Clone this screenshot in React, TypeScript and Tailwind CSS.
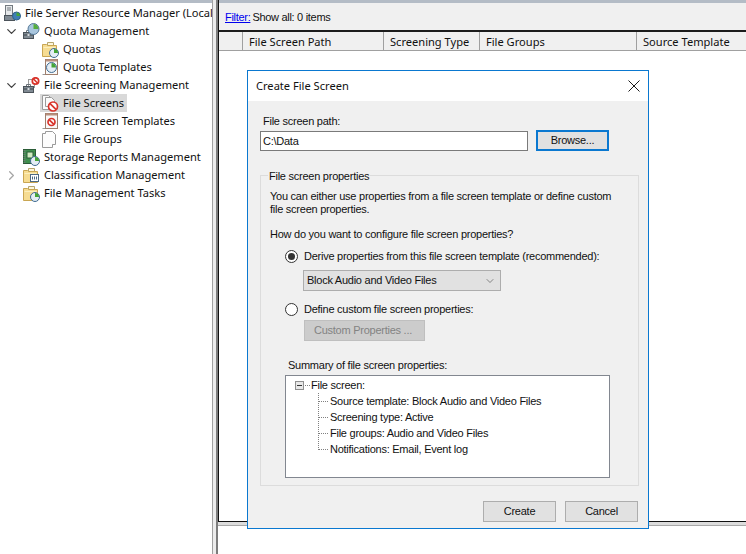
import { ChevronDown, ChevronRight } from "lucide-react";
import type { ReactNode } from "react";

function Blocked({ x = 8, y = 8, r = 4 }: { x?: number; y?: number; r?: number }) {
  return (
    <g>
      <circle cx={x} cy={y} r={r} fill="#fff" stroke="#d9342b" strokeWidth="1.7" />
      <path d={`M${x - r * 0.7} ${y - r * 0.7}L${x + r * 0.7} ${y + r * 0.7}`} stroke="#d9342b" strokeWidth="1.7" />
    </g>
  );
}

function Clock({ x = 12, y = 12, r = 4.5 }: { x?: number; y?: number; r?: number }) {
  return (
    <g>
      <circle cx={x} cy={y} r={r} fill="#e4edf5" stroke="#3f6b91" />
      <path d={`M${x} ${y}V${y - r + 0.5}A${r - 0.5} ${r - 0.5} 0 0 1 ${x + r - 0.5} ${y}Z`} fill="#45a536" />
    </g>
  );
}

// small dark case the management nodes sit on
function Case() {
  return (
    <g>
      <path d="M3.5 9.5v-2h4v2" fill="none" stroke="#6d757c" />
      <rect x="0.5" y="9.5" width="10" height="6" fill="#808a93" stroke="#4b535a" />
      <path d="M1 12h9" stroke="#3f464c" />
      <rect x="4.5" y="11" width="2" height="2" fill="#d7dce0" />
    </g>
  );
}

function Folder({ children }: { children?: ReactNode }) {
  return (
    <svg width="17" height="17" viewBox="0 0 17 17">
      <path d="M5.5 1.5h6v3h-6z" fill="#fdf6dc" stroke="#b6a56d" />
      <path d="M0.5 3.5h4l1 1h9v11h-14z" fill="#f6dc92" stroke="#c9a653" />
      <path d="M1.5 6.5h12" stroke="#fbeebc" />
      {children}
    </svg>
  );
}

function Page({ children }: { children?: ReactNode }) {
  return (
    <svg width="17" height="17" viewBox="0 0 17 17">
      <path d="M0.5 15.5h3" stroke="#9a9a9a" />
      <rect x="3.5" y="0.5" width="12" height="15" fill="#f8f8f8" stroke="#a07f6d" />
      <path d="M4 1.5h11" stroke="#b98f7c" strokeWidth="2" />
      {children}
    </svg>
  );
}

function TreeIcon({ name }: { name: string }) {
  switch (name) {
    case "root":
      return (
        <svg width="17" height="17" viewBox="0 0 17 17">
          <rect x="1.5" y="0.5" width="7" height="10" fill="#e6e8ea" stroke="#737a80" />
          <path d="M3 3h4M3 5h4" stroke="#737a80" />
          <rect x="0.5" y="10.5" width="10" height="5" fill="#808a93" stroke="#4b535a" />
          <circle cx="12.5" cy="11" r="4" fill="#3f7fb5" stroke="#2f5f8a" />
          <path d="M12.5 11V7.5A3.5 3.5 0 0 1 16 11Z" fill="#45a536" />
        </svg>
      );
    case "quota":
      return (
        <svg width="17" height="17" viewBox="0 0 17 17">
          <Case />
          <circle cx="10.5" cy="6" r="5.5" fill="#a9c6de" stroke="#567a99" />
          <path d="M10.5 6V1A5 5 0 0 1 15.5 6Z" fill="#55ad3e" />
        </svg>
      );
    case "quotas":
      return (
        <Folder>
          <Clock />
        </Folder>
      );
    case "templates":
      return (
        <Page>
          <Clock x={9.5} y={8.5} r={5} />
        </Page>
      );
    case "screening":
      return (
        <svg width="17" height="17" viewBox="0 0 17 17">
          <rect x="5.5" y="2.5" width="6" height="8" fill="#fafafa" stroke="#9a9a9a" />
          <Case />
          <Blocked x={12.5} y={4} r={3.2} />
        </svg>
      );
    case "screens":
      return (
        <svg width="17" height="17" viewBox="0 0 17 17">
          <path d="M0.5 0.5h6l2 2v12h-8z" fill="#fafafa" stroke="#9a9a9a" />
          <path d="M3.5 2.5h6l3 3v6h-9z" fill="#fafafa" stroke="#9a9a9a" />
          <Blocked x={11} y={11.5} r={4.5} />
        </svg>
      );
    case "screenTemplates":
      return (
        <Page>
          <Blocked x={9.5} y={9} r={3.5} />
        </Page>
      );
    case "groups":
      return (
        <svg width="17" height="17" viewBox="0 0 17 17">
          <path d="M0.5 2.5h7l3 3v11h-10z" fill="#fdfdfd" stroke="#9a9a9a" />
          <path d="M3.5 2.5v-2h7l3 3v10h-3" fill="#fdfdfd" stroke="#9a9a9a" />
        </svg>
      );
    case "reports":
      return (
        <svg width="17" height="17" viewBox="0 0 17 17">
          <rect x="0.5" y="0.5" width="12" height="14" fill="#3f8f4e" stroke="#2b5c37" />
          <path d="M1.5 1v13" stroke="#6d7a70" strokeWidth="2" strokeDasharray="1 1" />
          <rect x="4" y="3" width="6" height="6" fill="#cfe9c0" stroke="#2b5c37" />
          <Clock x={12} y={12} />
        </svg>
      );
    case "classification":
      return (
        <Folder>
          <rect x="7.5" y="7.5" width="8" height="7" fill="#fff" stroke="#4e6a85" />
          <path d="M9.5 9.5v3M11.5 9.5v3M13.5 9.5v3" stroke="#4e6a85" />
        </Folder>
      );
    default:
      return (
        <Folder>
          <Clock />
        </Folder>
      );
  }
}

const tree = [
  { label: "File Server Resource Manager (Local)", icon: "root", depth: 0 },
  { label: "Quota Management", icon: "quota", depth: 1, open: true },
  { label: "Quotas", icon: "quotas", depth: 2 },
  { label: "Quota Templates", icon: "templates", depth: 2 },
  { label: "File Screening Management", icon: "screening", depth: 1, open: true },
  { label: "File Screens", icon: "screens", depth: 2, selected: true },
  { label: "File Screen Templates", icon: "screenTemplates", depth: 2 },
  { label: "File Groups", icon: "groups", depth: 2 },
  { label: "Storage Reports Management", icon: "reports", depth: 1 },
  { label: "Classification Management", icon: "classification", depth: 1, closed: true },
  { label: "File Management Tasks", icon: "tasks", depth: 1 },
];

function TreeRow({ row }: { row: (typeof tree)[number] }) {
  const pad = row.depth === 2 ? "pl-[40px]" : "pl-[2px]";
  return (
    <div className={`flex h-[18px] items-center whitespace-nowrap ${pad}`}>
      {row.depth === 1 && (
        <span className="flex w-[19px] shrink-0 justify-center">
          {row.open && <ChevronDown size={15} strokeWidth={2} className="text-[#404040]" />}
          {row.closed && <ChevronRight size={15} strokeWidth={2} className="text-[#a6a6a6]" />}
        </span>
      )}
      <span className={`flex h-[18px] items-center gap-[4px] pl-[2px] pr-[3px] ${row.selected ? "bg-[#d9d9d9]" : ""}`}>
        <TreeIcon name={row.icon} />
        {row.label}
      </span>
    </div>
  );
}

function Radio({ checked }: { checked?: boolean }) {
  return (
    <span className="flex h-[13px] w-[13px] shrink-0 items-center justify-center rounded-full border border-[#333] bg-white">
      {checked && <span className="h-[7px] w-[7px] rounded-full bg-[#333]" />}
    </span>
  );
}

const columns = [
  { label: "File Screen Path", width: "w-[141px]" },
  { label: "Screening Type", width: "w-[96px]" },
  { label: "File Groups", width: "w-[157px]" },
  { label: "Source Template", width: "flex-1" },
];

const summary = [
  "Source template: Block Audio and Video Files",
  "Screening type: Active",
  "File groups: Audio and Video Files",
  "Notifications: Email, Event log",
];

export default function App() {
  return (
    <div className="relative flex h-[554px] w-[746px] overflow-hidden bg-white font-['Noto_Sans',sans-serif] text-[11.1px] text-[#111]">
      <aside className="h-full w-[212px] shrink-0 overflow-hidden border-t-[3px] border-t-[#b4bcc6] pt-[1px]">
        {tree.map((row) => (
          <TreeRow key={row.label} row={row} />
        ))}
      </aside>
      <div className="w-[6px] shrink-0 border-l border-r-2 border-l-[#a0a0a0] border-r-[#7c7c7c] bg-[#ececec]" />
      <main className="flex min-w-0 flex-1 flex-col">
        <div className="flex flex-1 flex-col border-b border-l border-[#111] border-t-0">
          <div className="flex h-[32px] items-center border-b-2 border-t-[3px] border-b-[#1c1c1c] border-t-[#b4bcc6] bg-[#f0f0f0] pl-[6px] pt-[2px] font-['Liberation_Sans',sans-serif] text-[11px] tracking-[-0.3px]">
            <span className="text-[#0000ee] underline">Filter:</span>
            <span className="ml-[2px]">Show all: 0 items</span>
          </div>
          <div className="flex h-[19px] border-b border-[#a0a0a0] bg-[#f0f0f0] pl-[23px] leading-[20px]">
            {columns.map((c) => (
              <div key={c.label} className={`${c.width} border-l border-[#a0a0a0] pl-[6px]`}>
                {c.label}
              </div>
            ))}
          </div>
        </div>
        <div className="h-[4px] border-b border-[#a8a8a8] bg-[#dcdcdc]" />
        <div className="h-[28px]" />
      </main>

      {/* dialog */}
      <section className="absolute left-[247px] top-[70px] flex h-[459px] w-[402px] flex-col border border-[#0a78d0] bg-[#f0f0f0] font-['Liberation_Sans',sans-serif] text-[11px] tracking-[-0.25px]">
        <header className="flex h-[30px] shrink-0 items-center justify-between bg-white px-[8px] font-['Noto_Sans',sans-serif] text-[11.1px] tracking-normal">
          <span>Create File Screen</span>
          <svg width="12" height="12" viewBox="0 0 12 12">
            <path d="M0.5 0.5l11 11M11.5 0.5l-11 11" stroke="#1a1a1a" strokeWidth="1" />
          </svg>
        </header>
        <div className="flex flex-1 flex-col px-[12px] pt-[12px]">
          <div className="pl-[3px] leading-[16px]">File screen path:</div>
          <div className="mt-[1px] flex items-start">
            <div className="mt-[1px] h-[20px] w-[268px] border border-[#7a7a7a] bg-white pl-[2px] leading-[18px]">C:\Data</div>
            <button className="ml-[8px] h-[21px] w-[73px] border-2 border-[#0a78d0] bg-[#e1e1e1]">Browse...</button>
          </div>

          <fieldset className="relative mt-[24px] h-[311px] w-[379px] border border-[#dcdcdc] pl-[9px]">
            <span className="absolute -top-[7px] left-[7px] bg-[#f0f0f0] pl-[1px] pr-[1px] leading-[14px]">File screen properties</span>
            <p className="mt-[14px] w-[350px] leading-[13px]">
              You can either use properties from a file screen template or define custom file screen properties.
            </p>
            <p className="mt-[10px] leading-[16px]">How do you want to configure file screen properties?</p>
            <label className="ml-[15px] mt-[6px] flex items-center gap-[6px] whitespace-nowrap leading-[16px]">
              <Radio checked />
              Derive properties from this file screen template (recommended):
            </label>
            <div className="ml-[33px] mt-[6px] flex h-[21px] w-[198px] items-center justify-between border border-[#adadad] bg-[#e1e1e1] pl-[3px] pr-[4px]">
              Block Audio and Video Files
              <ChevronDown size={12} strokeWidth={1.2} className="text-[#444]" />
            </div>
            <label className="ml-[15px] mt-[10px] flex items-center gap-[6px] whitespace-nowrap leading-[16px]">
              <Radio />
              Define custom file screen properties:
            </label>
            <div className="ml-[34px] mt-[3px] flex h-[21px] w-[121px] items-center justify-center border border-[#bfbfbf] bg-[#cccccc] pr-[3px] text-[#838383]">
              Custom Properties ...
            </div>
            <div className="ml-[18px] mt-[16px] leading-[16px]">Summary of file screen properties:</div>
            <div className="relative ml-[15px] mt-[2px] h-[103px] w-[325px] border border-[#828790] bg-white pt-[1px]">
              <div className="flex h-[16px] items-center pl-[9px]">
                <span className="flex h-[9px] w-[9px] items-center justify-center border border-[#8f8f8f] bg-[#e8e8e8]">
                  <span className="h-px w-[5px] bg-[#333]" />
                </span>
                <span className="ml-[1px] mr-[1px] w-[5px] border-t border-dotted border-[#808080]" />
                File screen:
              </div>
              {summary.map((s) => (
                <div key={s} className="flex h-[16px] items-center pl-[44px]">
                  {s}
                </div>
              ))}
              <svg className="absolute left-[32px] top-[17px]" width="12" height="60" viewBox="0 0 12 60">
                <path d="M0.5 0V57M1 8.5H11M1 24.5H11M1 40.5H11M1 56.5H11" stroke="#808080" strokeDasharray="1 1" />
              </svg>
            </div>
          </fieldset>

          <div className="mt-[15px] flex w-[378px] justify-end gap-[9px]">
            <button className="h-[21px] w-[73px] border border-[#adadad] bg-[#e1e1e1]">Create</button>
            <button className="h-[21px] w-[73px] border border-[#adadad] bg-[#e1e1e1]">Cancel</button>
          </div>
        </div>
      </section>
    </div>
  );
}
